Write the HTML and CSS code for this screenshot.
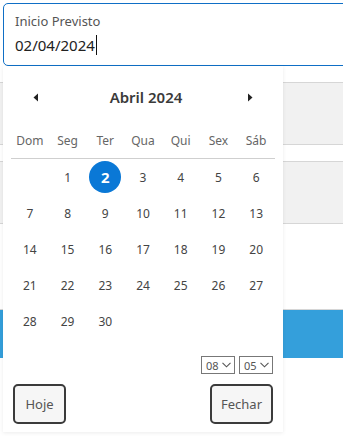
FILE: index.html
```html
<!doctype html>
<html lang="pt">
<head>
	<meta charset="UTF-8">
	<title>Inicio Previsto</title>
	<link rel="stylesheet" href="styles.css">
</head>
<body>
	<div class="page">
		<div class="field">
			<div class="field-label">Inicio Previsto</div>
			<div class="field-value">02/04/2024<span class="caret"></span></div>
		</div>
		<div class="panel"></div>
		<div class="panel"></div>
		<div class="bar"></div>

		<div class="picker">
			<div class="picker-head">
				<span class="nav">
					<svg width="6" height="9" viewBox="0 0 6 9"><path d="M5 0.5 L0.5 4.5 L5 8.5 Z" fill="#222"/></svg>
				</span>
				<span class="month">Abril 2024</span>
				<span class="nav">
					<svg width="6" height="9" viewBox="0 0 6 9"><path d="M1 0.5 L5.5 4.5 L1 8.5 Z" fill="#222"/></svg>
				</span>
			</div>
			<div class="week">
				<span>Dom</span><span>Seg</span><span>Ter</span><span>Qua</span><span>Qui</span><span>Sex</span><span>Sáb</span>
			</div>
			<div class="days">
				<span></span><span>1</span><span class="sel"><b>2</b></span><span>3</span><span>4</span><span>5</span><span>6</span>
				<span>7</span><span>8</span><span>9</span><span>10</span><span>11</span><span>12</span><span>13</span>
				<span>14</span><span>15</span><span>16</span><span>17</span><span>18</span><span>19</span><span>20</span>
				<span>21</span><span>22</span><span>23</span><span>24</span><span>25</span><span>26</span><span>27</span>
				<span>28</span><span>29</span><span>30</span><span></span><span></span><span></span><span></span>
			</div>
			<div class="time">
				<div class="sel-box">08<svg width="9" height="6" viewBox="0 0 9 6"><path d="M0.5 0.8 L4.5 4.8 L8.5 0.8" fill="none" stroke="#555" stroke-width="1.1"/></svg></div>
				<div class="sel-box">05<svg width="9" height="6" viewBox="0 0 9 6"><path d="M0.5 0.8 L4.5 4.8 L8.5 0.8" fill="none" stroke="#555" stroke-width="1.1"/></svg></div>
			</div>
			<div class="picker-foot">
				<button class="btn btn-today">Hoje</button>
				<button class="btn btn-close">Fechar</button>
			</div>
		</div>
	</div>
</body>
</html>
```

FILE: styles.css
```css
body {
	margin: 0;
	padding: 0;
	background: #fff;
	font-family: "Noto Sans", "Open Sans", sans-serif;
}
.page {
	position: relative;
	width: 343px;
	height: 446px;
	overflow: hidden;
	padding-top: 3px;
	box-sizing: border-box;
}
.field {
	margin-left: 3px;
	width: 370px;
	height: 63px;
	box-sizing: border-box;
	border: 1px solid #0f6fc6;
	border-radius: 5px;
	padding: 8px 11px 0;
}
.field-label {
	font-size: 13px;
	line-height: 18px;
	color: #555;
}
.field-value {
	margin-top: 4px;
	font-size: 15px;
	line-height: 22px;
	color: #222;
	display: flex;
	align-items: center;
}
.caret {
	display: inline-block;
	width: 0;
	height: 20px;
	border-left: 1px solid #111;
	margin-left: 1px;
}
.panel {
	margin-top: 16px;
	height: 63px;
	background: #f1f1f1;
	border-top: 1px solid #d6d6d6;
	border-bottom: 1px solid #d6d6d6;
	box-sizing: border-box;
}
.bar {
	margin-top: 85px;
	height: 49px;
	background: #349fdb;
	border-top: 1px solid #d6d6d6;
	box-sizing: border-box;
}

/* popup */
.picker {
	position: absolute;
	left: 3px;
	top: 66px;
	width: 280px;
	height: 366px;
	box-sizing: border-box;
	background: #fff;
	box-shadow: 0 1px 4px rgba(0, 0, 0, 0.08);
	padding: 14px 8px 0;
	color: #333;
}
.picker-head {
	display: flex;
	align-items: center;
	justify-content: space-between;
	height: 34px;
	padding: 0 20px 0 22px;
}
.nav {
	display: flex;
	align-items: center;
	width: 8px;
}
.month {
	font-size: 15px;
	font-weight: 600;
	color: #3a3a3a;
	margin-left: 4px;
}
.week {
	margin-top: 8px;
	display: grid;
	grid-template-columns: repeat(7, 1fr);
	height: 37px;
	box-sizing: border-box;
	border-bottom: 1px solid #cfcfcf;
	align-items: center;
	font-size: 12px;
	color: #666;
	text-align: center;
}
.days {
	display: grid;
	grid-template-columns: repeat(7, 1fr);
	grid-auto-rows: 36px;
	align-items: center;
	justify-items: center;
	font-size: 12px;
	color: #444;
}
.days .sel {
	width: 32px;
	height: 32px;
	border-radius: 50%;
	background: #0a78d6;
	color: #fff;
	display: flex;
	align-items: center;
	justify-content: center;
	font-size: 15px;
}
.time {
	display: flex;
	justify-content: flex-end;
	gap: 4px;
	margin-top: 17px;
	padding-right: 2px;
}
.sel-box {
	width: 34px;
	height: 18px;
	box-sizing: border-box;
	border: 1px solid #777;
	display: flex;
	align-items: center;
	justify-content: space-between;
	padding: 0 3px 0 4px;
	font-size: 11px;
	color: #555;
}
.picker-foot {
	display: flex;
	justify-content: space-between;
	margin-top: 10px;
	padding: 0 2px;
}
.btn {
	height: 40px;
	box-sizing: border-box;
	border: 2px solid #3b3b3b;
	border-radius: 5px;
	background: #f6f6f6;
	font-family: "Noto Sans", "Open Sans", sans-serif;
	font-size: 13px;
	color: #555;
	padding: 0;
}
.btn-today {
	width: 53px;
}
.btn-close {
	width: 63px;
}
```
